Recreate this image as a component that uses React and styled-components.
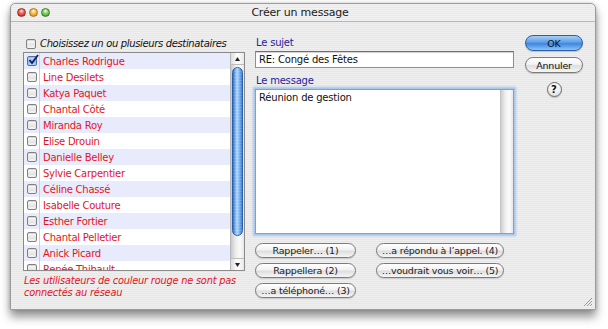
import React from 'react';
import styled, { createGlobalStyle } from 'styled-components';

const UI = '"DejaVu Sans", "Liberation Sans", sans-serif';

const GlobalStyle = createGlobalStyle`
  html, body {
    margin: 0;
    padding: 0;
    background: #ffffff;
  }
  body {
    font-family: ${UI};
  }
`;

const Page = styled.div`
  width: 608px;
  height: 329px;
  padding: 3px 0 0 10px;
  box-sizing: border-box;
`;

const Window = styled.div`
  position: relative;
  width: 586px;
  height: 307px;
  display: flex;
  flex-direction: column;
  border-radius: 5px 5px 0 0;
  border: 1px solid #9a9a9a;
  box-sizing: border-box;
  background: repeating-linear-gradient(to bottom, #efefef 0 1px, #e7e7e7 1px 2px);
  box-shadow: 0 7px 10px rgba(0, 0, 0, 0.42), 0 0 4px rgba(0, 0, 0, 0.18);
`;

const TitleBar = styled.div`
  height: 17px;
  display: flex;
  align-items: center;
  padding: 0 6px;
  border-bottom: 1px solid #b4b4b4;
  border-radius: 5px 5px 0 0;
  background: repeating-linear-gradient(to bottom, #f2f2f2 0 1px, #e9e9e9 1px 2px);
`;

const Lights = styled.div`
  display: flex;
  gap: 3px;
  width: 50px;
`;

const Light = styled.span`
  width: 9px;
  height: 9px;
  border-radius: 50%;
  border: 1px solid ${(p) => p.$edge};
  box-sizing: border-box;
  background: radial-gradient(circle at 50% 30%, #ffffff 0, ${(p) => p.$hi} 25%, ${(p) => p.$c} 75%);
`;

const Title = styled.div`
  flex: 1;
  text-align: center;
  font-size: 11px;
  color: #1a1a1a;
  letter-spacing: -0.2px;
  margin-right: 56px;
`;

const Body = styled.div`
  flex: 1;
  display: flex;
  padding: 13px 0 0 12px;
`;

const LeftColumn = styled.div`
  width: 222px;
  display: flex;
  flex-direction: column;
`;

const HeaderRow = styled.label`
  height: 17px;
  display: flex;
  align-items: center;
  gap: 4px;
  padding-left: 3px;
  font-size: 10px;
  font-style: italic;
  letter-spacing: -0.35px;
  color: #111;
`;

const Check = styled.span`
  width: 10px;
  height: 10px;
  flex: none;
  border: 1px solid #808080;
  border-radius: 2px;
  box-sizing: border-box;
  background: linear-gradient(#ffffff, #e4e4e4 60%, #f6f6f6);
  box-shadow: inset 0 1px 1px rgba(0, 0, 0, 0.15);
  position: relative;
  ${(p) =>
    p.$checked &&
    `
    background: linear-gradient(#cfe2fa, #8db9ee 60%, #b9d6f8);
    border-color: #4b6f9e;
  `}
`;

const CheckMark = styled.svg`
  position: absolute;
  left: 0;
  top: -3px;
`;

const ListBox = styled.div`
  height: 217px;
  display: flex;
  border: 1px solid #8a8a8a;
  background: #ffffff;
  overflow: hidden;
`;

const Rows = styled.div`
  flex: 1;
  display: flex;
  flex-direction: column;
  overflow: hidden;
`;

const Row = styled.div`
  height: 16px;
  flex: none;
  display: flex;
  align-items: center;
  background: ${(p) => (p.$alt ? '#e8ebfb' : '#ffffff')};
`;

const CheckCell = styled.div`
  width: 15px;
  height: 100%;
  display: flex;
  align-items: center;
  justify-content: center;
  border-right: 1px solid #cfcfd8;
`;

const Name = styled.div`
  padding-left: 3px;
  font-size: 10px;
  letter-spacing: -0.25px;
  color: #e3141c;
  white-space: nowrap;
`;

const Scroller = styled.div`
  width: 13px;
  display: flex;
  flex-direction: column;
  border-left: 1px solid #b8b8b8;
  background: linear-gradient(90deg, #c9c9c9, #ececec 35%, #fafafa 70%, #e6e6e6);
`;

const Arrow = styled.div`
  height: 11px;
  display: flex;
  align-items: center;
  justify-content: center;
  background: linear-gradient(90deg, #dcdcdc, #ffffff 50%, #e8e8e8);
  ${(p) => (p.$down ? 'border-top: 1px solid #bdbdbd;' : 'border-bottom: 1px solid #bdbdbd;')}
`;

const Track = styled.div`
  flex: 1;
  padding: 2px 0 22px;
  display: flex;
`;

const Thumb = styled.div`
  flex: 1;
  margin: 0 1px;
  border-radius: 6px;
  border: 1px solid #2a5fae;
  background: repeating-linear-gradient(to bottom, rgba(255, 255, 255, 0.12) 0 1px, rgba(255, 255, 255, 0) 1px 3px),
    linear-gradient(90deg, #2d68c4 0%, #76b0ef 25%, #b4d7fb 45%, #7bb4f0 70%, #3f7fd8 100%);
`;

const Note = styled.p`
  margin: 4px 0 0 1px;
  font-size: 9.8px;
  line-height: 12px;
  font-style: italic;
  letter-spacing: -0.2px;
  color: #e3141c;
`;

const FormColumn = styled.div`
  width: 259px;
  margin-left: 10px;
  display: flex;
  flex-direction: column;
`;

const Label = styled.div`
  height: 14px;
  padding: 2px 0 0 1px;
  font-size: 10px;
  letter-spacing: -0.2px;
  color: #23239a;
`;

const SubjectInput = styled.div`
  height: 15px;
  display: flex;
  align-items: center;
  padding-left: 3px;
  border: 1px solid #8e8e8e;
  border-top-color: #6e6e6e;
  background: #ffffff;
  box-shadow: inset 0 1px 1px rgba(0, 0, 0, 0.18);
  font-size: 10px;
  letter-spacing: -0.2px;
  color: #111;
  margin-bottom: 5px;
`;

const MessageArea = styled.div`
  height: 143px;
  display: flex;
  border: 1px solid #7da3d6;
  box-shadow: 0 0 0 1px #a9c7ec, 0 0 2px 2px rgba(120, 165, 225, 0.55);
  background: #ffffff;
`;

const MessageText = styled.div`
  flex: 1;
  padding: 2px 3px;
  font-size: 10px;
  letter-spacing: -0.2px;
  color: #111;
`;

const MessageTrack = styled.div`
  width: 12px;
  border-left: 1px solid #c4c4c4;
  background: linear-gradient(90deg, #cfcfcf, #efefef 35%, #fbfbfb 70%, #e6e6e6);
`;

const QuickGrid = styled.div`
  margin-top: 9px;
  display: grid;
  grid-template-columns: 101px 128px;
  grid-auto-rows: 15px;
  column-gap: 20px;
  row-gap: 5px;
`;

const Pill = styled.button`
  height: 15px;
  padding: 0;
  border: 1px solid #7b7b7b;
  border-radius: 8px;
  background: linear-gradient(#ffffff, #f2f2f2 45%, #dedede 55%, #f6f6f6);
  box-shadow: 0 1px 1px rgba(0, 0, 0, 0.15);
  font-family: ${UI};
  font-size: 9.5px;
  letter-spacing: -0.2px;
  color: #1a1a1a;
  grid-column: ${(p) => p.$col};
  grid-row: ${(p) => p.$row};
`;

const ActionColumn = styled.div`
  width: 58px;
  margin-left: 11px;
  display: flex;
  flex-direction: column;
  align-items: center;
  gap: 6px;
  padding-top: 0px;
`;

const ActionButton = styled.button`
  width: 58px;
  height: 16px;
  padding: 0;
  border-radius: 8px;
  font-family: ${UI};
  font-size: 9.5px;
  letter-spacing: -0.2px;
  color: #111;
  border: 1px solid ${(p) => (p.$primary ? '#2b5ea8' : '#7b7b7b')};
  background: ${(p) =>
    p.$primary
      ? 'linear-gradient(#a9d0f6, #5d9ee8 45%, #3f86dd 55%, #8cc4f6)'
      : 'linear-gradient(#ffffff, #f2f2f2 45%, #dedede 55%, #f6f6f6)'};
  box-shadow: 0 1px 1px rgba(0, 0, 0, 0.18);
`;

const HelpButton = styled.button`
  width: 15px;
  height: 15px;
  margin-top: 3px;
  padding: 0;
  border-radius: 50%;
  border: 1px solid #6a6a6a;
  background: radial-gradient(circle at 50% 30%, #ffffff, #ececec 60%, #d2d2d2);
  box-shadow: 0 1px 1px rgba(0, 0, 0, 0.2);
  font-family: ${UI};
  font-size: 10px;
  font-weight: bold;
  line-height: 13px;
  color: #111;
`;

const Grip = styled.svg`
  position: absolute;
  right: 2px;
  bottom: 2px;
`;

const names = [
  'Charles Rodrigue',
  'Line Desilets',
  'Katya Paquet',
  'Chantal Côté',
  'Miranda Roy',
  'Elise Drouin',
  'Danielle Belley',
  'Sylvie Carpentier',
  'Céline Chassé',
  'Isabelle Couture',
  'Esther Fortier',
  'Chantal Pelletier',
  'Anick Picard',
  'Renée Thibault',
];

const quick = [
  { label: 'Rappeler… (1)', col: 1, row: 1 },
  { label: 'Rappellera (2)', col: 1, row: 2 },
  { label: '…a téléphoné… (3)', col: 1, row: 3 },
  { label: '…a répondu à l’appel. (4)', col: 2, row: 1 },
  { label: '…voudrait vous voir… (5)', col: 2, row: 2 },
];

function ArrowIcon({ down }) {
  return (
    <svg width="5" height="4" viewBox="0 0 5 4">
      <polygon points={down ? '0,0 5,0 2.5,4' : '2.5,0 5,4 0,4'} fill="#222" />
    </svg>
  );
}

export default function App() {
  return (
    <>
      <GlobalStyle />
      <Page>
        <Window>
          <TitleBar>
            <Lights>
              <Light $c="#d2302a" $hi="#f08a7e" $edge="#9a2a22" />
              <Light $c="#e29a1d" $hi="#f7d27a" $edge="#a8701c" />
              <Light $c="#4fae35" $hi="#a8e08e" $edge="#3a7a2a" />
            </Lights>
            <Title>Créer un message</Title>
          </TitleBar>
          <Body>
            <LeftColumn>
              <HeaderRow>
                <Check />
                Choisissez un ou plusieurs destinataires
              </HeaderRow>
              <ListBox>
                <Rows>
                  {names.map((n, i) => (
                    <Row key={n} $alt={i % 2 === 0}>
                      <CheckCell>
                        <Check $checked={i === 0}>
                          {i === 0 && (
                            <CheckMark width="11" height="11" viewBox="0 0 11 11">
                              <path d="M1.5 6 L4 9 L10 1" fill="none" stroke="#10206a" strokeWidth="1.8" />
                            </CheckMark>
                          )}
                        </Check>
                      </CheckCell>
                      <Name>{n}</Name>
                    </Row>
                  ))}
                </Rows>
                <Scroller>
                  <Arrow>
                    <ArrowIcon />
                  </Arrow>
                  <Track>
                    <Thumb />
                  </Track>
                  <Arrow $down>
                    <ArrowIcon down />
                  </Arrow>
                </Scroller>
              </ListBox>
              <Note>
                Les utilisateurs de couleur rouge ne sont pas
                <br />
                connectés au réseau
              </Note>
            </LeftColumn>
            <FormColumn>
              <Label>Le sujet</Label>
              <SubjectInput>RE: Congé des Fêtes</SubjectInput>
              <Label>Le message</Label>
              <MessageArea>
                <MessageText>Réunion de gestion</MessageText>
                <MessageTrack />
              </MessageArea>
              <QuickGrid>
                {quick.map((q) => (
                  <Pill key={q.label} $col={q.col} $row={q.row}>
                    {q.label}
                  </Pill>
                ))}
              </QuickGrid>
            </FormColumn>
            <ActionColumn>
              <ActionButton $primary>OK</ActionButton>
              <ActionButton>Annuler</ActionButton>
              <HelpButton>?</HelpButton>
            </ActionColumn>
          </Body>
          <Grip width="11" height="11" viewBox="0 0 11 11">
            <path d="M10 2 L2 10 M10 5 L5 10 M10 8 L8 10" stroke="#9a9a9a" strokeWidth="1" />
          </Grip>
        </Window>
      </Page>
    </>
  );
}
